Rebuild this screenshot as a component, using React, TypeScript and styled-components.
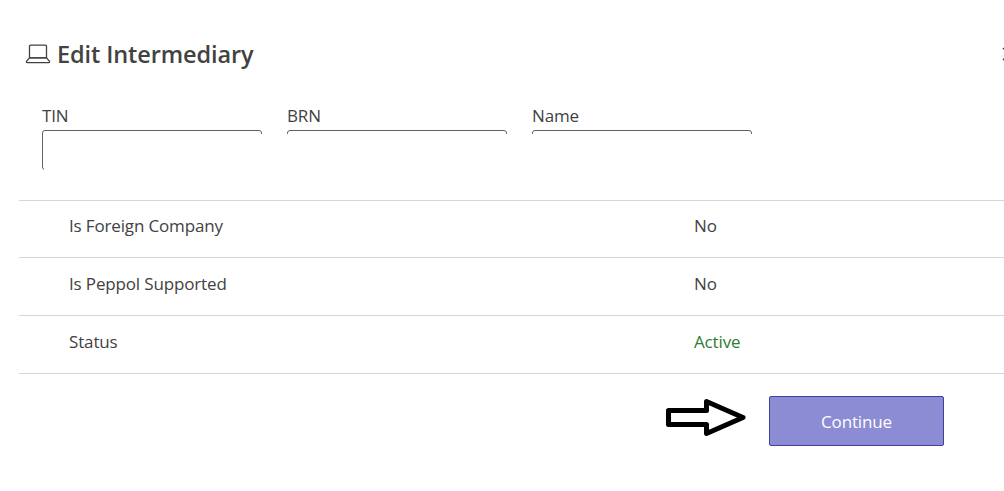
import styled, { createGlobalStyle } from "styled-components";

const GlobalStyle = createGlobalStyle`
  html, body {
    margin: 0;
    padding: 0;
    background: #fff;
    overflow: hidden;
  }
  body {
    font-family: "Open Sans", "Liberation Sans", sans-serif;
    color: #424242;
  }
`;

const fields = [
  { label: "TIN", open: true },
  { label: "BRN", open: false },
  { label: "Name", open: false },
];

const rows = [
  { label: "Is Foreign Company", value: "No" },
  { label: "Is Peppol Supported", value: "No" },
  { label: "Status", value: "Active", active: true },
];

const App = () => {
  return (
    <Page>
      <GlobalStyle />
      <Header>
        <Title>
          <svg width="26" height="20" viewBox="0 0 26 20" fill="none" stroke="#424242" strokeWidth="1.3">
            <path d="M4.5 2.2c0-.6.4-1 1-1h15c.6 0 1 .4 1 1v11.6h-17z" />
            <path d="M4.5 13.8h17l3 3.6c.3.5 0 1.2-.7 1.2H2.200c-.7 0-1-.7-.7-1.200z" />
          </svg>
          <h1>Edit Intermediary</h1>
        </Title>
        <CloseIcon width="14" height="14" viewBox="0 0 14 14" stroke="#424242" strokeWidth="1.5">
          <path d="M1 1l12 12M13 1L1 13" />
        </CloseIcon>
      </Header>

      <Fields>
        {fields.map((field) => (
          <Field key={field.label}>
            <label>{field.label}</label>
            <InputBox $open={field.open} />
          </Field>
        ))}
      </Fields>

      <Table>
        {rows.map((row, index) => (
          <Row key={row.label} $first={index === 0}>
            <RowLabel>{row.label}</RowLabel>
            <RowValue $active={row.active}>{row.value}</RowValue>
          </Row>
        ))}
      </Table>

      <Footer>
        <ArrowIcon width="82" height="40" viewBox="0 0 82 40" fill="#fff" stroke="#000" strokeWidth="5" strokeLinejoin="round">
          <path d="M2.500 13.500h38v-9L77 20.500 40.500 36.500V27.500h-38z" />
        </ArrowIcon>
        <ContinueButton>Continue</ContinueButton>
      </Footer>
    </Page>
  );
};

const Page = styled.div`
  width: 1004px;
  height: 491px;
  box-sizing: border-box;
  padding: 38px 0 0 19px;
  overflow: hidden;
`;

const Header = styled.div`
  display: flex;
  justify-content: space-between;
  align-items: center;
  height: 32px;
  padding-left: 6px;
`;

const Title = styled.div`
  display: flex;
  align-items: center;
  gap: 6px;

  h1 {
    margin: 0;
    font-size: 23.5px;
    font-weight: 600;
    line-height: 32px;
    color: #424242;
    letter-spacing: -0.1px;
  }
`;

const CloseIcon = styled.svg`
  flex: none;
  margin-right: -12px;
`;

const Fields = styled.div`
  display: flex;
  gap: 25px;
  margin-top: 35px;
  padding-left: 23px;
`;

const Field = styled.div`
  display: flex;
  flex-direction: column;
  width: 220px;

  label {
    font-size: 17px;
    line-height: 22px;
    height: 25px;
    color: #424242;
    letter-spacing: -0.15px;
  }
`;

const InputBox = styled.div<{ $open: boolean }>`
  position: relative;
  box-sizing: border-box;
  height: 40px;
  border: 1px solid #616161;
  border-radius: 3px;

  &::after {
    content: "";
    position: absolute;
    top: 3px;
    bottom: -1px;
    left: ${(p) => (p.$open ? "1px" : "-1px")};
    right: -1px;
    background: #fff;
  }
`;

const Table = styled.div`
  margin-top: 30px;
  border-top: 1px solid #d6d6d6;
`;

const Row = styled.div<{ $first: boolean }>`
  display: flex;
  align-items: center;
  box-sizing: border-box;
  height: ${(p) => (p.$first ? "57px" : "58px")};
  padding: 0 0 7px 50px;
  border-bottom: 1px solid #d6d6d6;
`;

const RowLabel = styled.div`
  width: 625px;
  font-size: 17px;
  color: #424242;
  letter-spacing: -0.15px;
`;

const RowValue = styled.div<{ $active?: boolean }>`
  font-size: 17px;
  color: ${(p) => (p.$active ? "#2e7d32" : "#424242")};
  letter-spacing: -0.15px;
`;

const Footer = styled.div`
  display: flex;
  align-items: center;
  justify-content: flex-end;
  gap: 21px;
  margin-top: 22px;
  padding-right: 60px;
`;

const ArrowIcon = styled.svg`
  margin-bottom: 8px;
`;

const ContinueButton = styled.button`
  width: 175px;
  height: 50px;
  padding: 0;
  background: #8b8cd4;
  border: 1px solid #3f4299;
  border-radius: 2px;
  color: #fff;
  font-family: inherit;
  font-size: 17px;
  letter-spacing: -0.15px;
`;

export default App;
